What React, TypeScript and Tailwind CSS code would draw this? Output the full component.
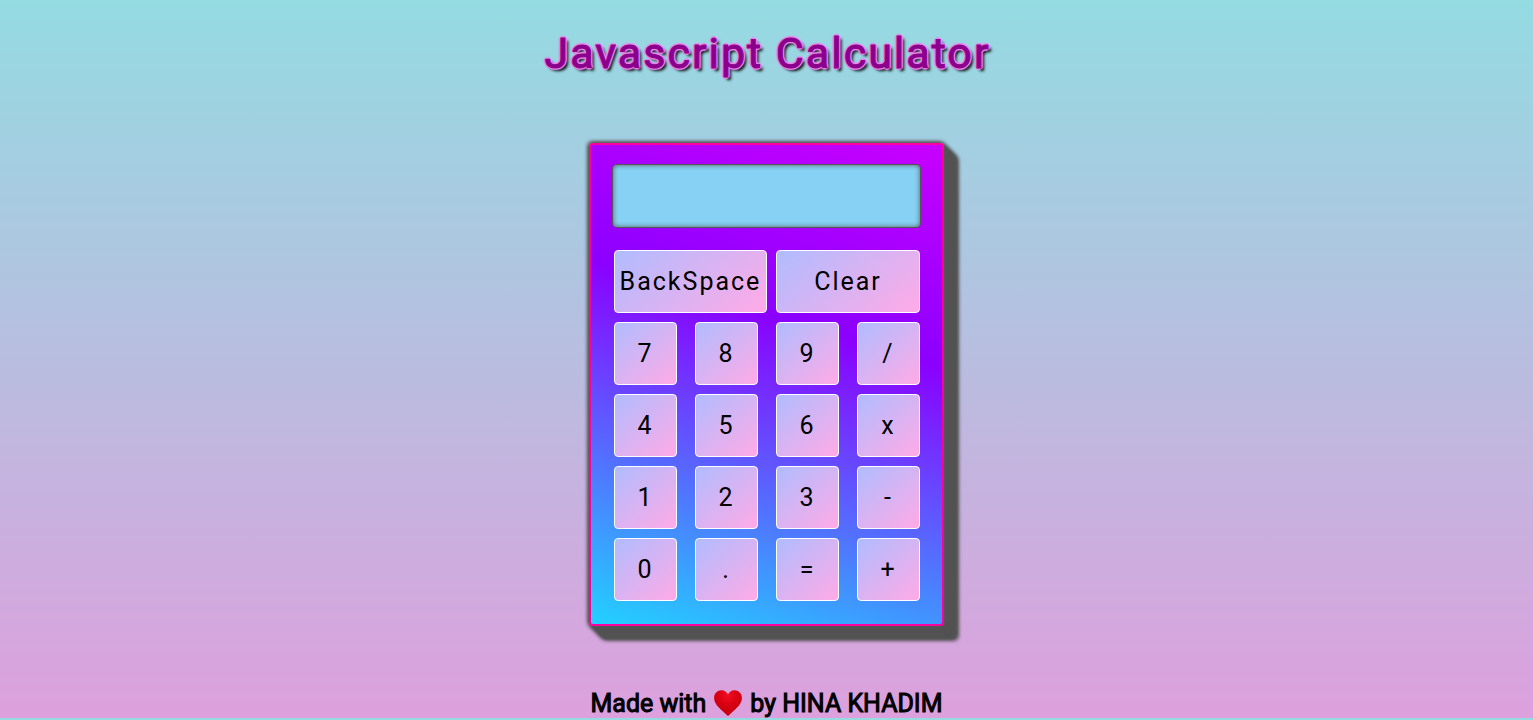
import { useState } from "react";

const keys = ["7", "8", "9", "/", "4", "5", "6", "x", "1", "2", "3", "-", "0", ".", "=", "+"];

const keyStyle =
  "h-[63px] cursor-pointer rounded border border-white bg-[linear-gradient(140deg,#b0bcff,#ffaae6)] text-[25px] leading-[30px] tracking-[2px] text-black";

const depth = Array.from({ length: 16 }, (_, i) => `${i - 1}px ${i - 1}px 4px #555`).join(", ");

function evaluate(expression: string): string {
  const tokens = expression.match(/\d*\.?\d+|[-+x/]/g) ?? [];
  const terms: number[] = [];
  let operator = "+";
  for (const token of tokens) {
    if (/^[-+x/]$/.test(token)) {
      operator = token;
      continue;
    }
    const value = Number(token);
    if (operator === "+") terms.push(value);
    else if (operator === "-") terms.push(-value);
    else {
      const previous = terms.pop() ?? 0;
      terms.push(operator === "x" ? previous * value : previous / value);
    }
  }
  return terms.length ? String(terms.reduce((a, b) => a + b, 0)) : "";
}

function Heart() {
  return (
    <svg viewBox="0 0 28 26" className="mx-2 mt-px h-[26px] w-7" role="img" aria-label="love">
      <defs>
        <radialGradient id="heart" cx="50%" cy="20%" r="75%">
          <stop offset="0" stopColor="#f20d22" />
          <stop offset="0.5" stopColor="#d80012" />
          <stop offset="1" stopColor="#c2000b" />
        </radialGradient>
      </defs>
      <path
        d="M14 4.6C12.8 1.9 10.4.3 7.6.3 3.4.3.1 3.5.1 7.9.1 15.2 8.2 20.2 14 26 19.8 20.2 27.9 15.2 27.9 7.9 27.9 3.5 24.6.3 20.4.3 17.6.3 15.2 1.9 14 4.6Z"
        fill="url(#heart)"
      />
    </svg>
  );
}

export default function App() {
  const [display, setDisplay] = useState("");

  const press = (key: string) =>
    setDisplay((current) => (key === "=" ? evaluate(current) : current + key));

  return (
    <div className="min-h-screen bg-[#94dbe2] font-['Roboto',sans-serif] text-black">
      <div className="flex flex-col items-center bg-[linear-gradient(#94dbe2,#dda0dd)] pt-[27px]">
        <h1 className="pl-0.5 text-[43px] leading-[52px] font-normal tracking-[2px] text-[#8b008b] [-webkit-text-stroke:1px_#8b008b] [text-shadow:1px_1px_violet,-1px_-1px_violet,1px_-1px_violet,-1px_1px_violet,2px_0_1px_violet,-2px_0_1px_violet,0_2px_1px_violet,0_-2px_1px_violet,3px_3px_3px_black]">
          Javascript Calculator
        </h1>

        <main
          className="mt-16 w-[355px] rounded border-2 border-[#ff00a0] bg-[linear-gradient(17deg,#22d1ff_0%,#8b00ff_62%,#c800ff_100%)] px-[22px] pt-5 pb-[23px]"
          style={{ boxShadow: depth }}
        >
          <input
            type="text"
            readOnly
            aria-label="Result"
            value={display}
            className="block h-[62px] w-full rounded-sm bg-[#87d1f5] px-3 text-right text-[25px] shadow-[0_0_0_1px_#555,inset_0_0_5px_#555] outline-none"
          />
          <div className="mt-[23px] flex gap-[9px] pl-px">
            <button
              type="button"
              className={`w-[153px] ${keyStyle}`}
              onClick={() => setDisplay((current) => current.slice(0, -1))}
            >
              BackSpace
            </button>
            <button type="button" className={`flex-1 ${keyStyle}`} onClick={() => setDisplay("")}>
              Clear
            </button>
          </div>
          <div className="mt-[9px] grid grid-cols-4 gap-x-[18px] gap-y-[9px] pl-px">
            {keys.map((key) => (
              <button key={key} type="button" className={keyStyle} onClick={() => press(key)}>
                {key}
              </button>
            ))}
          </div>
        </main>

        <footer className="mt-[63px] flex h-[29px] items-start text-[25px] leading-[30px] [-webkit-text-stroke:1px_black]">
          <span>Made with</span>
          <Heart />
          <span>by HINA KHADIM</span>
        </footer>
      </div>
    </div>
  );
}
